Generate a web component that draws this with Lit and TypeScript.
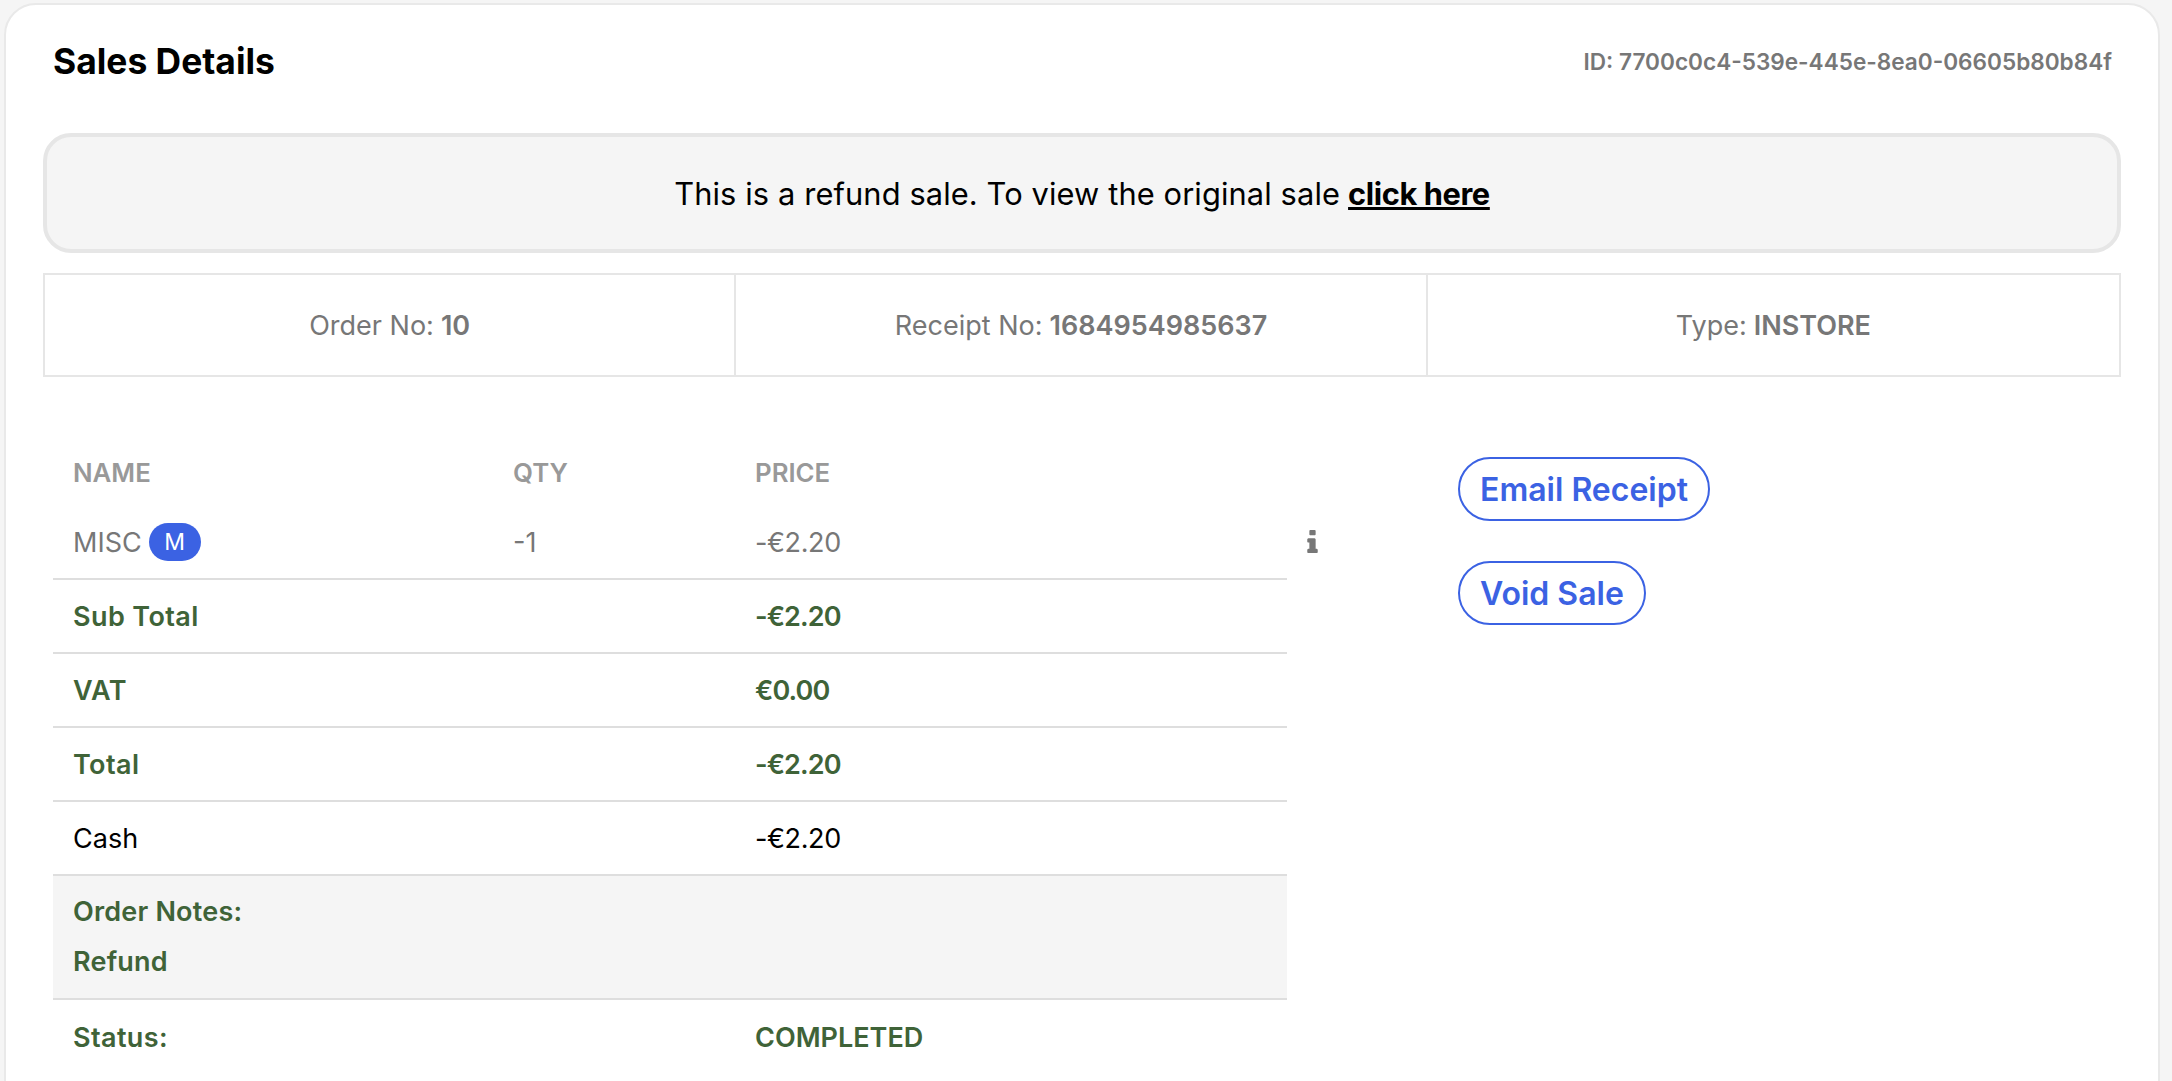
import { LitElement, html, css } from "lit";
import { customElement } from "lit/decorators.js";

@customElement("app-root")
export class AppRoot extends LitElement {
  static styles = css`
    :host { display: block; height: 1081px; overflow: hidden; background: #f5f5f5; font-family: "Inter", "Liberation Sans", sans-serif; color: #000; }
    .card { margin: 3px 12px 0 4px; height: 1200px; box-sizing: border-box; background: #fff; border: 2px solid #e9e9e9; border-radius: 32px; padding: 0 37px; }
    .top { display: flex; justify-content: space-between; align-items: center; height: 112px; padding: 0 0 0 10px; margin-bottom: 16px; box-sizing: border-box; }
    .title { font-size: 35.4px; font-weight: 700; }
    .id { font-size: 22.6px; font-weight: 600; color: #777; padding-right: 9px; }
    .alert { height: 120px; box-sizing: border-box; border: 4px solid #e6e6e6; border-radius: 28px; background: #f5f5f5; display: flex; align-items: center; justify-content: center; font-size: 30.8px; letter-spacing: 0.12px; }
    .alert a { color: #000; font-weight: 700; text-decoration: underline; margin-left: 8px; letter-spacing: -0.4px; }
    .info { margin-top: 20px; height: 104px; display: grid; grid-template-columns: repeat(3, 1fr); border: 2px solid #e6e6e6; box-sizing: border-box; color: #777; font-size: 27px; }
    .info > div { display: flex; align-items: center; justify-content: center; gap: 7px; }
    .info > div:not(:last-child) { border-right: 2px solid #e6e6e6; }
    .info b { font-weight: 600; }
    .body { display: flex; margin-top: 64px; padding-left: 10px; }
    .table { width: 1234px; font-size: 27px; }
    .row { display: grid; grid-template-columns: 440px 242px 1fr; padding: 0 20px 0 20px; align-items: center; height: 74px; box-sizing: border-box; border-bottom: 2px solid #dedede; }
    .row.head { height: 62px; border: 0; color: #999; font-weight: 600; font-size: 25.8px; }
    .row.item { color: #777; height: 77px; padding-top: 3px; }
    .row.sum { color: #3f6338; font-weight: 600; letter-spacing: 0.4px; }
    .row.plain { color: #000; }
    .row.notes { display: block; height: 124px; background: #f5f5f5; color: #3f6338; font-weight: 600; padding-top: 11px; line-height: 50px; letter-spacing: 0.2px; }
    .row.last { border: 0; }
    .money { letter-spacing: -0.4px; }
    .row.sum .money { letter-spacing: -0.9px; }
    .row.last .status { letter-spacing: 0; }
    .name { display: flex; align-items: center; gap: 7px; }
    .badge { background: #3b62e3; color: #fff; border-radius: 19px; width: 52px; height: 38px; display: flex; align-items: center; justify-content: center; font-size: 23px; font-weight: 400; }
    .side { width: 34px; padding: 89px 0 0 20px; flex: none; }
    .side svg { display: block; width: 11px; height: 23px; fill: #777; }
    .actions { display: flex; flex-direction: column; align-items: flex-start; gap: 40px; margin-left: 117px; padding-top: 16px; }
    button { font: inherit; height: 64px; padding: 0 20px; border: 2px solid #3b62e3; border-radius: 32px; background: #fff; color: #3b62e3; font-size: 32px; font-weight: 600; }
  `;
  render() {
    return html`<div class="card">
      <div class="top"><div class="title">Sales Details</div><div class="id">ID: 7700c0c4-539e-445e-8ea0-06605b80b84f</div></div>
      <div class="alert"><span>This is a refund sale. To view the original sale</span><a href="#">click here</a></div>
      <div class="info">
        <div><span>Order No:</span><b>10</b></div>
        <div><span>Receipt No:</span><b>1684954985637</b></div>
        <div><span>Type:</span><b>INSTORE</b></div>
      </div>
      <div class="body">
        <div class="table">
          <div class="row head"><span>NAME</span><span>QTY</span><span>PRICE</span></div>
          <div class="row item"><span class="name">MISC <span class="badge">M</span></span><span>-1</span><span class="money">-€2.20</span></div>
          <div class="row sum"><span>Sub Total</span><span></span><span class="money">-€2.20</span></div>
          <div class="row sum"><span>VAT</span><span></span><span class="money">€0.00</span></div>
          <div class="row sum"><span>Total</span><span></span><span class="money">-€2.20</span></div>
          <div class="row plain"><span>Cash</span><span></span><span class="money">-€2.20</span></div>
          <div class="row notes"><div>Order Notes:</div><div>Refund</div></div>
          <div class="row sum last"><span>Status:</span><span></span><span class="status">COMPLETED</span></div>
        </div>
        <div class="side"><svg viewBox="0 48 640 1408"><path d="M640 1264v128q0 26-19 45t-45 19h-512q-26 0-45-19t-19-45v-128q0-26 19-45t45-19h64v-384h-64q-26 0-45-19t-19-45v-128q0-26 19-45t45-19h384q26 0 45 19t19 45v576h64q26 0 45 19t19 45zm-128-1152v192q0 26-19 45t-45 19h-256q-26 0-45-19t-19-45v-192q0-26 19-45t45-19h256q26 0 45 19t19 45z"/></svg></div>
        <div class="actions"><button>Email Receipt</button><button>Void Sale</button></div>
      </div>
    </div>`;
  }
}
